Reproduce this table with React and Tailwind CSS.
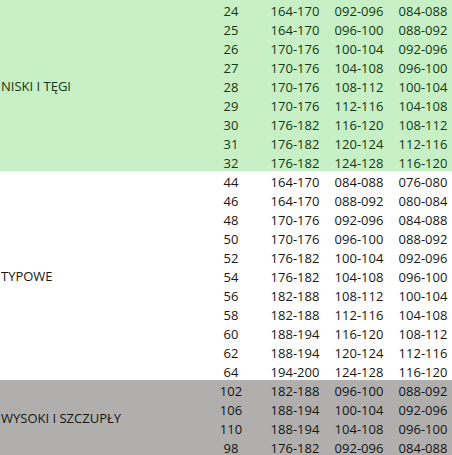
const GROUPS = [
  {
    label: 'NISKI I TĘGI',
    bg: 'bg-[#c8f0c6]',
    text: 'text-[#123812]',
    rows: [
      ['24', '164-170', '092-096', '084-088'],
      ['25', '164-170', '096-100', '088-092'],
      ['26', '170-176', '100-104', '092-096'],
      ['27', '170-176', '104-108', '096-100'],
      ['28', '170-176', '108-112', '100-104'],
      ['29', '170-176', '112-116', '104-108'],
      ['30', '176-182', '116-120', '108-112'],
      ['31', '176-182', '120-124', '112-116'],
      ['32', '176-182', '124-128', '116-120'],
    ],
  },
  {
    label: 'TYPOWE',
    bg: 'bg-white',
    text: 'text-[#161616]',
    rows: [
      ['44', '164-170', '084-088', '076-080'],
      ['46', '164-170', '088-092', '080-084'],
      ['48', '170-176', '092-096', '084-088'],
      ['50', '170-176', '096-100', '088-092'],
      ['52', '176-182', '100-104', '092-096'],
      ['54', '176-182', '104-108', '096-100'],
      ['56', '182-188', '108-112', '100-104'],
      ['58', '182-188', '112-116', '104-108'],
      ['60', '188-194', '116-120', '108-112'],
      ['62', '188-194', '120-124', '112-116'],
      ['64', '194-200', '124-128', '116-120'],
    ],
  },
  {
    label: 'WYSOKI I SZCZUPŁY',
    bg: 'bg-[#b0afae]',
    text: 'text-[#141414]',
    rows: [
      ['102', '182-188', '096-100', '088-092'],
      ['106', '188-194', '100-104', '092-096'],
      ['110', '188-194', '104-108', '096-100'],
      ['98', '176-182', '092-096', '084-088'],
    ],
  },
]

function Group({ group }) {
  return (
    <div className={`flex ${group.bg} ${group.text}`}>
      <div className="w-[199px] shrink-0 flex items-center pt-[1px] pl-[1px] leading-none">
        {group.label}
      </div>
      <div className="flex flex-col">
        {group.rows.map((row, i) => (
          <div key={i} className="grid grid-cols-[64px_64px_64px_64px] h-[19px]">
            {row.map((cell, j) => (
              <div key={j} className="flex items-end justify-center pb-[1px] leading-none">
                {cell}
              </div>
            ))}
          </div>
        ))}
      </div>
    </div>
  )
}

export default function App() {
  return (
    <div
      className="w-[452px] h-[455px] overflow-hidden bg-white text-[13px]"
      style={{ fontFamily: '"Open Sans", "Noto Sans", sans-serif' }}
    >
      {GROUPS.map((g, i) => (
        <Group key={i} group={g} />
      ))}
    </div>
  )
}
